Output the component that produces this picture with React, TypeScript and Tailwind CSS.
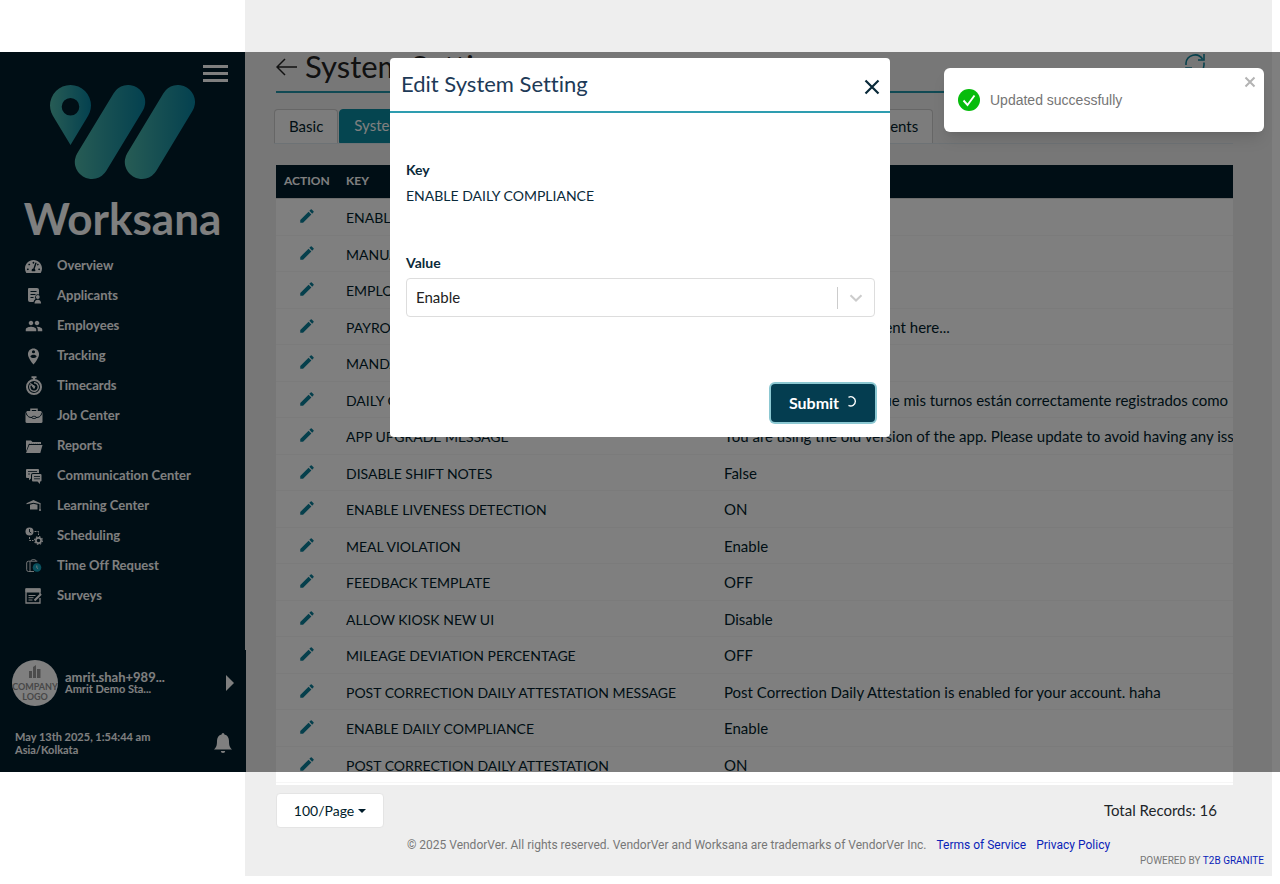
import React from 'react';
import { MdEdit, MdPeople, MdPersonPinCircle } from 'react-icons/md';
import { FaTachometerAlt } from 'react-icons/fa';

function ApplicantIcon() {
  return (
    <svg viewBox="0 0 16 16" width="16" height="16" fill="white">
      <path d="M3 0h8a2 2 0 0 1 2 2v4.500a3 3 0 0 0-3.500 4.400A4 4 0 0 0 7.500 14H4a2 2 0 0 1-2-2V1a1 1 0 0 1 1-1z" />
      <path d="M4.500 3.500h6M4.500 6.500h5M4.500 9.500h3" stroke="#001c2b" strokeWidth="1.100" />
      <circle cx="11.800" cy="9" r="1.900" />
      <path d="M8.500 15.500c0-2.500 1.300-3.800 3.300-3.800s3.300 1.300 3.300 3.800z" />
    </svg>
  );
}

function StopwatchIcon() {
  return (
    <svg viewBox="0 0 18 20" width="18" height="20" fill="none" stroke="white">
      <path d="M6.500 1.200h5M9 1v3" strokeWidth="2" />
      <circle cx="9" cy="11" r="7" strokeWidth="2" />
      <path d="M5.500 8.500A4.300 4.300 0 1 0 9 6.700" strokeWidth="1.400" />
      <path d="M5.500 7.500 10 10.500 9 12.500z" fill="white" strokeWidth="1" />
    </svg>
  );
}

function BriefcaseIcon() {
  return (
    <svg viewBox="0 0 18 16" width="18" height="16">
      <path d="M6 3V1.200h6V3" fill="none" stroke="white" strokeWidth="1.500" />
      <path d="M2 3h14l1.500 2v8.500a1.500 1.500 0 0 1-1.500 1.500H2a1.500 1.500 0 0 1-1.500-1.500V5z" fill="white" />
      <path d="M1 4.500C2 8.500 4 9.500 7 9.500h4c3 0 5-1 6-5" fill="none" stroke="#001c2b" strokeWidth="1" />
      <rect x="7" y="8.300" width="4" height="2.200" rx="1" fill="white" stroke="#001c2b" strokeWidth=".8" />
    </svg>
  );
}

function FolderIcon() {
  return (
    <svg viewBox="0 0 18 15" width="18" height="15" fill="white">
      <path d="M1 1.500h5l1.500 1.500H16v2H3.800L1 12.500z" />
      <path d="M4.300 6H17.500l-2.200 8H1z" />
      <path d="M4 5.300h12" stroke="#001c2b" strokeWidth=".8" strokeDasharray="1 1" />
    </svg>
  );
}

function ChatIcon() {
  return (
    <svg viewBox="0 0 16 15" width="16" height="15" fill="white">
      <path d="M1 0h11a1 1 0 0 1 1 1v3H7a2 2 0 0 0-2 2v3.500l-2 1.800V9H1a1 1 0 0 1-1-1V1a1 1 0 0 1 1-1z" />
      <path d="M7 5h7.500a1 1 0 0 1 1 1v5.500a1 1 0 0 1-1 1H14V15l-2.500-2.500H7a1 1 0 0 1-1-1V6a1 1 0 0 1 1-1z" />
      <path d="M2 2.500h9M8 7.500h6M8 9.800h6M2 5h2" stroke="#001c2b" strokeWidth=".8" />
    </svg>
  );
}

function CapIcon() {
  return (
    <svg viewBox="0 0 16 12" width="16" height="12" fill="white">
      <path d="M7.500 0 14.500 3.200v1L7.500 2.800.5 4.200v-1z" />
      <path d="M4 4.800 7.500 3.700 11.500 4.800V9.500H4z" />
      <path d="M14 3.500V9" stroke="white" strokeWidth="1" />
      <circle cx="14" cy="10" r="1.100" />
    </svg>
  );
}

function ScheduleIcon() {
  return (
    <svg viewBox="0 0 18 18" width="18" height="18">
      <circle cx="4.500" cy="4.500" r="4" fill="white" />
      <path d="M4.500 2v3l1.800 1" fill="none" stroke="#001c2b" strokeWidth=".9" />
      <path d="M9.500 4.500h4V8M4.500 10v3.500h4" fill="none" stroke="white" strokeWidth="1" strokeDasharray="2 1" />
      <circle cx="13.500" cy="13.500" r="2.600" fill="none" stroke="white" strokeWidth="1.700" />
      <circle cx="13.500" cy="13.500" r="3.900" fill="none" stroke="white" strokeWidth="1.200" strokeDasharray="1.500 1.560" />
    </svg>
  );
}

function TimeOffIcon() {
  return (
    <svg viewBox="0 0 16 14" width="16" height="14" fill="none">
      <path d="M8 12.500H2.500a1.800 1.800 0 0 1-1.800-1.800V4a1.800 1.800 0 0 1 1.800-1.800h8.800M4 2.500v10M5 2c0-2 5-2 5 0" stroke="white" strokeWidth=".9" />
      <circle cx="11" cy="8.500" r="4.300" fill="#12a3bd" />
      <path d="M10.800 6.500v2.200l1.300 1" stroke="white" strokeWidth=".9" />
    </svg>
  );
}

function SurveyIcon() {
  return (
    <svg viewBox="0 0 17 16" width="17" height="16" fill="none" stroke="white">
      <path d="M1 1h14v3H1z" fill="white" />
      <path d="M15 10v5H1V1h14v5" strokeWidth="1.300" />
      <path d="M3.500 7.500h7M3.500 9.700h5M3.500 12h4" strokeWidth="1" />
      <path d="M9.500 12.500 16 6" strokeWidth="2.200" />
    </svg>
  );
}

const navItems: { label: string; icon: React.ReactNode }[] = [
  { label: 'Overview', icon: <FaTachometerAlt className="size-[17px] text-white" /> },
  { label: 'Applicants', icon: <ApplicantIcon /> },
  { label: 'Employees', icon: <MdPeople className="size-[18px] text-white" /> },
  { label: 'Tracking', icon: <MdPersonPinCircle className="size-[19px] text-white" /> },
  { label: 'Timecards', icon: <StopwatchIcon /> },
  { label: 'Job Center', icon: <BriefcaseIcon /> },
  { label: 'Reports', icon: <FolderIcon /> },
  { label: 'Communication Center', icon: <ChatIcon /> },
  { label: 'Learning Center', icon: <CapIcon /> },
  { label: 'Scheduling', icon: <ScheduleIcon /> },
  { label: 'Time Off Request', icon: <TimeOffIcon /> },
  { label: 'Surveys', icon: <SurveyIcon /> },
];

const tabs = ['Basic', 'System', 'Notifications', 'Integrations', 'Templates', 'Holidays', 'Documents'];

const settings: [string, string][] = [
  ['ENABLE SCHEDULING', 'Enable'],
  ['MANUAL TIMECARD', 'Enable'],
  ['EMPLOYEE REFERRAL', 'Enable'],
  ['PAYROLL MESSAGE', 'Please insert your comment here...'],
  ['MANDATORY BREAK', 'Enable'],
  ['DAILY COMPLIANCE MESSAGE', 'Por este acto, certifico que mis turnos están correctamente registrados como'],
  ['APP UPGRADE MESSAGE', 'You are using the old version of the app. Please update to avoid having any issues'],
  ['DISABLE SHIFT NOTES', 'False'],
  ['ENABLE LIVENESS DETECTION', 'ON'],
  ['MEAL VIOLATION', 'Enable'],
  ['FEEDBACK TEMPLATE', 'OFF'],
  ['ALLOW KIOSK NEW UI', 'Disable'],
  ['MILEAGE DEVIATION PERCENTAGE', 'OFF'],
  ['POST CORRECTION DAILY ATTESTATION MESSAGE', 'Post Correction Daily Attestation is enabled for your account. haha'],
  ['ENABLE DAILY COMPLIANCE', 'Enable'],
  ['POST CORRECTION DAILY ATTESTATION', 'ON'],
];

function Logo() {
  return (
    <svg viewBox="0 0 145 94" width="145" height="94" aria-label="Worksana logo">
      <defs>
        <linearGradient id="pin" x1="0" x2="1">
          <stop offset="0" stopColor="#4fb8aa" />
          <stop offset="1" stopColor="#08829f" />
        </linearGradient>
        <linearGradient id="bar1" gradientUnits="userSpaceOnUse" x1="25" x2="95" y1="0" y2="0">
          <stop offset="0" stopColor="#4fb8aa" />
          <stop offset="1" stopColor="#08829f" />
        </linearGradient>
        <linearGradient id="bar2" gradientUnits="userSpaceOnUse" x1="75" x2="145" y1="0" y2="0">
          <stop offset="0" stopColor="#4fb8aa" />
          <stop offset="1" stopColor="#08829f" />
        </linearGradient>
      </defs>
      <path fill="url(#pin)" fillRule="evenodd" d="M20.500 0A20.500 20.500 0 0 1 41 20.500c0 5-2 9-4.500 13L20.500 60 4.500 33.500C2 29.500 0 25.500 0 20.500A20.500 20.500 0 0 1 20.500 0zm0 13a8.800 8.800 0 1 0 0 17.600 8.800 8.800 0 0 0 0-17.600z" />
      <path d="M78.200 17 41.800 77" stroke="url(#bar1)" strokeWidth="34" strokeLinecap="round" />
      <path d="M128 17 91.800 77" stroke="url(#bar2)" strokeWidth="34" strokeLinecap="round" />
    </svg>
  );
}

function Sidebar() {
  return (
    <aside className="z-10 w-[245px] shrink-0 pt-[52px]">
      <div className="flex h-[598px] flex-col bg-[#001c2b] text-white">
        <div className="flex justify-end pt-[13px] pr-[17px]">
          <button aria-label="Toggle menu" className="flex h-[17px] w-[25px] flex-col justify-between">
            <span className="h-[3px] w-full bg-white" />
            <span className="h-[3px] w-full bg-white" />
            <span className="h-[3px] w-full bg-white" />
          </button>
        </div>
        <div className="flex flex-col items-center pt-[3px]">
          <Logo />
          <span className="mt-3 text-[44px] leading-[54px] font-bold">Worksana</span>
        </div>
        <nav className="mt-[6px] flex flex-col">
          {navItems.map((item) => (
            <a key={item.label} href="#" className="flex h-[30px] items-center text-[13px] font-bold">
              <span className="flex w-[57px] justify-center pl-[10px]">{item.icon}</span>
              {item.label}
            </a>
          ))}
        </nav>
      </div>
      <div className="flex h-[122px] w-[246px] flex-col bg-[#001c2b] text-white">
        <button className="flex items-center pt-[10px] pl-3 text-left">
          <span className="flex size-[46px] shrink-0 flex-col items-center justify-center overflow-hidden rounded-full bg-white text-[9px] leading-[10px] font-bold text-[#909090]">
            <svg viewBox="0 0 12 13" width="12" height="13" fill="#999">
              <path d="M0 6h3v7H0zM4 2l3-2v13H4zM8 4h3.500v9H8z" />
            </svg>
            <span className="mt-1">COMPANY</span>
            <span>LOGO</span>
          </span>
          <span className="ml-[7px] flex flex-1 flex-col font-bold">
            <span className="text-[13px] leading-3">amrit.shah+989...</span>
            <span className="text-[11px] leading-3">Amrit Demo Sta...</span>
          </span>
          <svg viewBox="0 0 8 16" width="8" height="16" fill="white" className="mr-3">
            <path d="M0 0l8 8-8 8z" />
          </svg>
        </button>
        <div className="flex items-center justify-between pt-6 pr-[14px] pl-[15px]">
          <div className="text-[11px] leading-[13px] font-bold">
            <p>May 13th 2025, 1:54:44 am</p>
            <p>Asia/Kolkata</p>
          </div>
          <button aria-label="Notifications">
            <svg viewBox="0 0 18 20" width="18" height="20" fill="white">
              <path d="M9 0a1.500 1.500 0 0 1 1.400 1.500C13.500 2.200 15 4.800 15 8c0 4.500.8 6.500 3 8.500H0C2.200 14.500 3 12.500 3 8c0-3.200 1.500-5.800 4.600-6.500A1.500 1.500 0 0 1 9 0zM6.800 18h4.400a2.200 2 0 0 1-4.400 0z" />
            </svg>
          </button>
        </div>
      </div>
    </aside>
  );
}

function Main() {
  return (
    <main className="mr-2 min-w-0 flex-1 bg-[#eee] pt-[52px]">
      <div className="pr-[39px] pl-[31px]">
        <header className="flex h-[41px] items-start border-b-2 border-[#2295a8]">
          <button aria-label="Back" className="pt-[6px]">
            <svg viewBox="0 0 22 18" width="22" height="18" fill="none" stroke="#222" strokeWidth="1.500">
              <path d="M21 9H1M9 1 1 9l8 8" />
            </svg>
          </button>
          <h1 className="ml-[7px] flex-1 text-[31px] leading-7 text-[#222]">System Settings</h1>
          <button aria-label="Refresh" className="mr-[27px] pt-px">
            <svg viewBox="0 0 22 22" width="22" height="22" fill="none" stroke="#0f8299" strokeWidth="1.600">
              <path d="M2 12V10a9 9 0 0 1 16.500-4M20 9.500V12A9 9 0 0 1 3.500 16.500M20 1v6h-6M2 20v-5h6" />
            </svg>
          </button>
        </header>
        <div role="tablist" className="mt-4 -ml-[2px] flex gap-px border-b border-[#dbe5ea] text-[15px]">
          {tabs.map((tab) =>
            tab === 'System' ? (
              <button key={tab} role="tab" aria-selected="true" className="h-[34px] rounded-t border border-[#0b8ba0] bg-[#0b8ba0] px-[14px] pb-px text-white">
                {tab}
              </button>
            ) : (
              <button key={tab} role="tab" aria-selected="false" className="h-[34px] rounded-t border border-b-0 border-[#ccc] bg-[#f8f8f8] px-[14px] pb-px text-[#001c2b]">
                {tab}
              </button>
            ),
          )}
        </div>
        <div className="mt-[21px] overflow-hidden bg-white pb-[2px]">
          <table className="w-full table-fixed border-separate border-spacing-0 text-left text-[14px] leading-5 text-[#001c2b]">
            <thead>
              <tr className="h-[34px] text-[12px] text-white">
                <th className="w-[62px] border-b border-[#ddd] bg-[#001c2b] bg-clip-padding pb-[2px] pl-2 whitespace-nowrap">ACTION</th>
                <th className="w-[378px] border-b border-[#ddd] bg-[#001c2b] bg-clip-padding px-2 pb-[2px]">KEY</th>
                <th className="border-b border-[#ddd] bg-[#001c2b] bg-clip-padding px-2 pb-[2px]">VALUE</th>
              </tr>
            </thead>
            <tbody>
              {settings.map(([key, value]) => (
                <tr key={key} className="odd:h-[37px] even:h-9">
                  <td className="border-b border-[#f6f6f6] pb-[2px] text-center">
                    <button aria-label={`Edit ${key}`} className="block w-full">
                      <MdEdit className="mx-auto size-[18px] text-[#0b7f98]" />
                    </button>
                  </td>
                  <td className="border-b border-[#f6f6f6] px-2 pt-[2px] whitespace-nowrap">{key}</td>
                  <td className="overflow-hidden border-b border-[#f6f6f6] pl-2 text-[15px] whitespace-nowrap">{value}</td>
                </tr>
              ))}
            </tbody>
          </table>
        </div>
        <div className="mt-2 flex items-center justify-between pr-4 text-[15px]">
          <button className="flex h-[35px] w-[108px] items-center justify-center gap-1 rounded border border-[#e4e4e4] bg-white text-[14px] text-[#001c2b]">
            100/Page
            <svg viewBox="0 0 8 4" width="8" height="4" fill="#001c2b">
              <path d="M0 0h8L4 4z" />
            </svg>
          </button>
          <p className="text-[#212529]">Total Records: 16</p>
        </div>
      </div>
      <footer className="pb-2 font-[Roboto,sans-serif]">
        <p className="pt-[9px] text-center text-[12px] leading-4 text-[#777]">
          © 2025 VendorVer. All rights reserved. VendorVer and Worksana are trademarks of VendorVer Inc.
          <a href="#" className="ml-[10px] text-[#0a23b8]">Terms of Service</a>
          <a href="#" className="ml-[10px] text-[#0a23b8]">Privacy Policy</a>
        </p>
        <p className="pt-px pr-2 text-right text-[10px] leading-[14px] text-[#777]">
          POWERED BY <a href="#" className="text-[#0a23b8]">T2B GRANITE</a>
        </p>
      </footer>
    </main>
  );
}

function EditDialog() {
  return (
    <section role="dialog" aria-labelledby="dialog-title" className="mx-auto mt-[6px] w-[500px] rounded bg-white text-[#0a2a3a]">
      <header className="flex h-[55px] items-center justify-between border-b-2 border-[#2e9db0] pr-2 pl-[11px]">
        <h2 id="dialog-title" className="pb-px text-[22px] leading-8 text-[#1d3a57]">Edit System Setting</h2>
        <button aria-label="Close" className="pt-1">
          <svg viewBox="0 0 20 20" width="20" height="20" stroke="#0a2a3a" strokeWidth="2.200">
            <path d="M3.500 3.500l13 13M16.500 3.500l-13 13" />
          </svg>
        </button>
      </header>
      <div className="pt-[47px] pr-[15px] pl-4 text-[14px] leading-5">
        <p className="font-bold">Key</p>
        <p className="mt-[6px]">ENABLE DAILY COMPLIANCE</p>
        <label htmlFor="value" className="mt-[47px] block font-bold">Value</label>
        <div className="relative mt-[5px]">
          <select id="value" className="h-[39px] w-full appearance-none rounded border border-[#ddd] bg-white pb-px pl-[9px] text-[15px] text-[#222]">
            <option>Enable</option>
            <option>Disable</option>
          </select>
          <span className="pointer-events-none absolute inset-y-0 right-0 flex w-[38px] items-center">
            <span className="h-[22px] w-px bg-[#ccc]" />
            <svg viewBox="0 0 14 8" width="14" height="8" fill="none" stroke="#ccc" strokeWidth="2" className="ml-[11px]">
              <path d="M1.500 1.200 7 6.500l5.500-5.300" />
            </svg>
          </span>
        </div>
      </div>
      <div className="mt-[67px] flex justify-end pr-[15px] pb-[15px]">
        <button className="flex h-[38px] w-[104px] items-center justify-center gap-[6px] rounded bg-[#043d50] text-[16px] font-bold text-white ring-2 ring-[#8cc8d2]">
          Submit
          <svg viewBox="0 0 12 16" width="12" height="16" fill="none" stroke="white" strokeWidth="1.400">
            <path d="M3.500 2.300A4.600 4.600 0 1 1 3.500 10.300" />
          </svg>
        </button>
      </div>
    </section>
  );
}

function Toast() {
  return (
    <div role="status" className="absolute top-4 right-4 flex h-16 w-80 items-center rounded-md bg-white pl-[14px] font-['Liberation_Sans',sans-serif] text-[14px] text-[#757575] shadow-lg">
      <svg viewBox="0 0 22 22" width="22" height="22" className="mr-[10px]">
        <circle cx="11" cy="11" r="11" fill="#07bc0c" />
        <path d="M5.500 11.500 9.500 16l7-9.500" fill="none" stroke="white" strokeWidth="1.900" />
      </svg>
      Updated successfully
      <button aria-label="Dismiss" className="absolute top-2 right-2">
        <svg viewBox="0 0 12 12" width="12" height="12" stroke="#b3b3b3" strokeWidth="2">
          <path d="M1.500 1.500l9 9M10.500 1.500l-9 9" />
        </svg>
      </button>
    </div>
  );
}

export default function App() {
  return (
    <div className="relative flex min-h-screen items-start bg-white font-[Lato,sans-serif] [font-variant-ligatures:no-common-ligatures]">
      <Sidebar />
      <Main />
      <div className="absolute inset-x-0 top-[52px] z-20 flex h-[720px] flex-col bg-black/50">
        <EditDialog />
        <Toast />
      </div>
    </div>
  );
}
